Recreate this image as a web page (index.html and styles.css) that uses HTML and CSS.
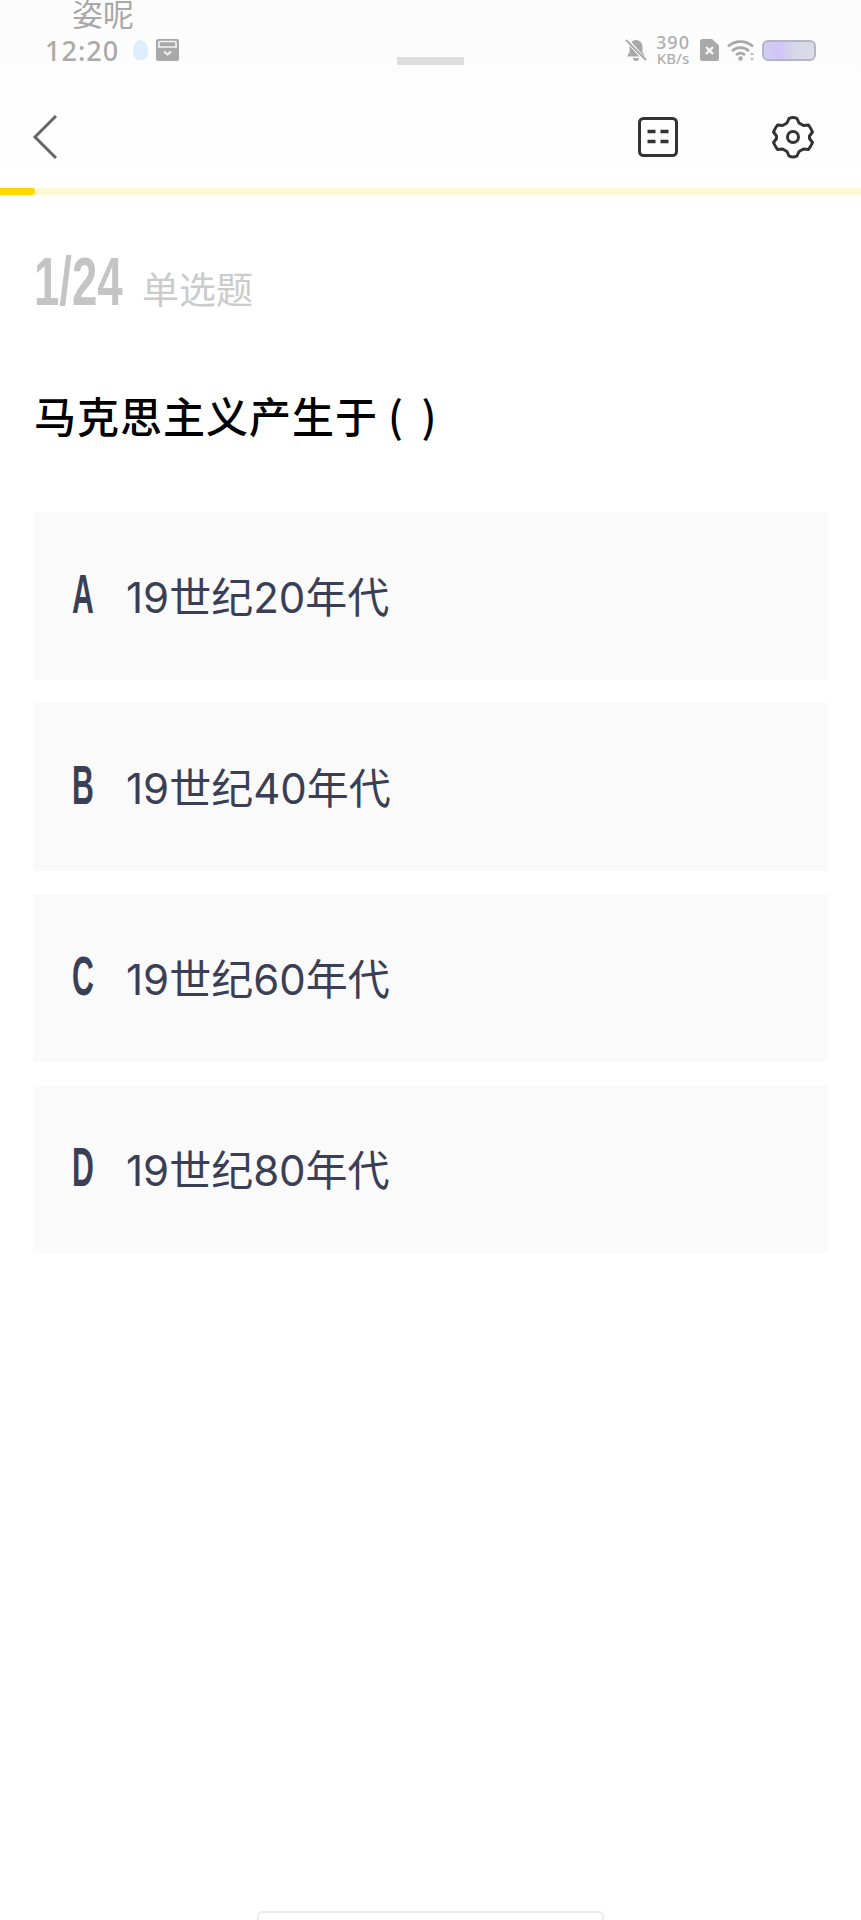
FILE: index.html
```html
<!DOCTYPE html>
<html lang="zh-CN">
<head>
    <meta charset="UTF-8">
    <meta name="viewport" content="width=device-width, initial-scale=1.0">
    <title>单选题</title>
    <link rel="stylesheet" href="styles.css">
</head>
<body>
    <div class="page">
        <header class="top">
            <div class="notice">姿呢</div>

            <!-- Status bar -->
            <div class="status">
                <div class="status-left">
                    <span class="time">12:20</span>
                    <span class="blob"></span>
                    <svg class="box-icon" width="23" height="22" viewBox="0 0 23 22">
                        <rect width="23" height="22" rx="2" fill="#a9a9a9"/>
                        <path d="M3 8V4a1.5 1.5 0 0 1 1.5-1.5h14A1.5 1.5 0 0 1 20 4v4M2 8h19" fill="none" stroke="#f4f4f4" stroke-width="1.6"/>
                        <path d="M8 12.500l3.500 3 3.500-3" fill="none" stroke="#f4f4f4" stroke-width="2"/>
                    </svg>
                </div>
                <div class="status-right">
                    <svg class="bell" width="24" height="24" viewBox="0 0 24 24">
                        <path d="M12 2c-4 0-6.500 3-6.500 7v5L3 18.500h18L18.500 14V9C18.500 5 16 2 12 2zM9 20a3 3 0 0 0 6 0z" fill="#a9a9a9"/>
                        <path d="M3 2l18 20" stroke="#fff" stroke-width="4"/>
                        <path d="M2 2l20 20" stroke="#a9a9a9" stroke-width="2"/>
                    </svg>
                    <div class="speed"><span class="speed-num">390</span><span class="speed-unit">KB/s</span></div>
                    <svg class="sim" width="19" height="22" viewBox="0 0 19 22">
                        <path d="M2.500 0H12l7 6.500V19.500a2.500 2.500 0 0 1-2.500 2.500h-14A2.500 2.500 0 0 1 0 19.500v-17A2.500 2.500 0 0 1 2.500 0z" fill="#a9a9a9"/>
                        <path d="M6 8l7 7M13 8l-7 7" stroke="#fafafa" stroke-width="2.200"/>
                    </svg>
                    <svg class="wifi" width="28" height="22" viewBox="0 0 28 22">
                        <g fill="none" stroke="#a9a9a9" stroke-width="2.600">
                            <path d="M1 7.500C8 1 19 1 26 7.500"/>
                            <path d="M5 12c5-4.500 12-4.500 17 0"/>
                            <path d="M9 16c3-2.500 6-2.500 9 0"/>
                        </g>
                        <circle cx="13.500" cy="19.500" r="2.200" fill="#a9a9a9"/>
                        <path d="M25 13l2 3h-4zM25 22l2-3h-4z" fill="#bdbdbd"/>
                    </svg>
                    <div class="battery"></div>
                </div>
            </div>
            <div class="handle"></div>

            <!-- Toolbar -->
            <nav class="toolbar">
                <svg class="back" width="26" height="46" viewBox="0 0 26 46">
                    <path d="M24 2L3 23l21 21" fill="none" stroke="#666" stroke-width="3"/>
                </svg>
                <div class="tools">
                    <svg width="42" height="42" viewBox="0 0 42 42">
                        <rect x="2.500" y="2.500" width="37" height="37" rx="4" fill="none" stroke="#333" stroke-width="3"/>
                        <path d="M10.500 15.500h8M23.500 15.500h8M10.500 25.500h8M23.500 25.500h8" stroke="#333" stroke-width="3.500"/>
                    </svg>
                    <svg width="42" height="44" viewBox="0 0 42 44">
                        <path d="M17 3.500q4-2 8 0l2 4.500 4.500 2.500 5-.5q2.500 3.500 4 7l-3 4v2.500l3 4q-1.500 3.500-4 7l-5-.5-4.500 2.500-2 4.500q-4 2-8 0l-2-4.500-4.500-2.500-5 .5q-2.500-3.500-4-7l3-4V21l-3-4q1.500-3.500 4-7l5 .5L15 8z" fill="none" stroke="#333" stroke-width="3" stroke-linejoin="round"/>
                        <circle cx="21" cy="22" r="5.500" fill="none" stroke="#333" stroke-width="3"/>
                    </svg>
                </div>
            </nav>
        </header>

        <div class="progress"><div class="progress-fill"></div></div>

        <main class="quiz">
            <div class="quiz-head">
                <span class="count"><span class="narrow">1/24</span></span>
                <span class="type">单选题</span>
            </div>
            <h1 class="question">马克思主义产生于<span class="blank">( )</span></h1>

            <div class="options">
                <div class="option"><span class="letter"><span class="letter-in">A</span></span><span>19世纪20年代</span></div>
                <div class="option"><span class="letter"><span class="letter-in">B</span></span><span>19世纪40年代</span></div>
                <div class="option"><span class="letter"><span class="letter-in">C</span></span><span>19世纪60年代</span></div>
                <div class="option"><span class="letter"><span class="letter-in">D</span></span><span>19世纪80年代</span></div>
            </div>
        </main>

        <div class="home-bar"></div>
    </div>
</body>
</html>
```

FILE: styles.css
```css
* {
    margin: 0;
    padding: 0;
    box-sizing: border-box;
}

body {
    background: #fff;
    font-family: Inter, "Noto Sans CJK SC", sans-serif;
}

.page {
    position: relative;
    width: 861px;
    height: 1920px;
    overflow: hidden;
    display: flex;
    flex-direction: column;
}

/* Header */
.top {
    height: 188px;
    background: linear-gradient(#fcfcfc, #fdfdfd 50%, #fff);
}

.notice {
    height: 30px;
    padding-left: 72px;
    font-size: 31px;
    line-height: 30px;
    color: #a8a8a8;
    overflow: hidden;
}

.status {
    height: 40px;
    padding: 0 45px;
    display: flex;
    justify-content: space-between;
    align-items: center;
}

.status-left, .status-right {
    display: flex;
    align-items: center;
}

.time {
    font-family: "Noto Sans", sans-serif;
    font-size: 27px;
    font-weight: 500;
    letter-spacing: 1px;
    color: #aaa;
    width: 88px;
}

.blob {
    width: 15px;
    height: 20px;
    margin-right: 8px;
    border-radius: 50% 50% 40% 40%;
    background: #dceefb;
}

.status-right svg {
    flex: none;
}

.speed {
    display: flex;
    flex-direction: column;
    align-items: center;
    gap: 2px;
    width: 32px;
    margin: 0 11px 0 9px;
    font-family: "Noto Sans", sans-serif;
    font-weight: 500;
    color: #aeaeae;
}

.speed-num {
    font-size: 18px;
    line-height: 15px;
    letter-spacing: 1px;
}

.speed-unit {
    font-size: 15px;
    line-height: 13px;
}

.wifi {
    margin-left: 8px;
}

.battery {
    width: 54px;
    height: 21px;
    margin-left: 7px;
    border: 2px solid #b4b5c6;
    border-radius: 6px;
    background: linear-gradient(90deg, #cfcfee, #d2c4f8 30%, #d6d6e8 60%, #dcdce6);
}

.handle {
    position: absolute;
    left: 397px;
    top: 57px;
    width: 67px;
    height: 8px;
    background: #ddd;
}

.toolbar {
    height: 118px;
    padding: 16px 47px 0 32px;
    display: flex;
    justify-content: space-between;
    align-items: center;
}

.tools {
    display: flex;
    align-items: center;
    gap: 93px;
}

/* Progress */
.progress {
    height: 7px;
    background: #fff8d4;
}

.progress-fill {
    width: 35px;
    height: 100%;
    background: #ffd800;
    border-radius: 0 3px 3px 0;
}

/* Question */
.quiz {
    padding: 0 33px;
}

.quiz-head {
    height: 58px;
    margin-top: 57px;
    padding-left: 1px;
    display: flex;
    align-items: center;
}

.count {
    width: 108px;
    flex: none;
}

.narrow {
    display: inline-block;
    font-family: "Liberation Sans", sans-serif;
    font-weight: 700;
    font-size: 68px;
    line-height: 58px;
    color: #c4c4c4;
    transform: scaleX(0.67);
    transform-origin: left center;
}

.type {
    font-size: 37px;
    line-height: 58px;
    color: #cbcbcb;
    margin-top: 19px;
}

.question {
    margin-top: 75px;
    padding-left: 1px;
    font-family: "Noto Sans CJK SC", sans-serif;
    font-size: 42px;
    line-height: 60px;
    font-weight: 500;
    letter-spacing: 1px;
    color: #000;
}

.blank {
    margin-left: 10px;
    word-spacing: 7px;
}

.options {
    margin-top: 67px;
    display: flex;
    flex-direction: column;
    gap: 23px;
}

.option {
    height: 168px;
    padding: 0 0 4px 39px;
    display: flex;
    align-items: center;
    background: #fafafb;
    font-size: 42px;
    color: #3a3f55;
}

.letter {
    width: 54px;
    flex: none;
}

.letter-in {
    display: inline-block;
    font-family: "Liberation Sans", sans-serif;
    font-weight: 700;
    font-size: 55px;
    line-height: 60px;
    transform: scaleX(0.55);
    transform-origin: left center;
}

/* Bottom indicator */
.home-bar {
    position: absolute;
    left: 257px;
    top: 1911px;
    width: 347px;
    height: 16px;
    border: 2px solid #ececec;
    border-radius: 5px;
}
```
